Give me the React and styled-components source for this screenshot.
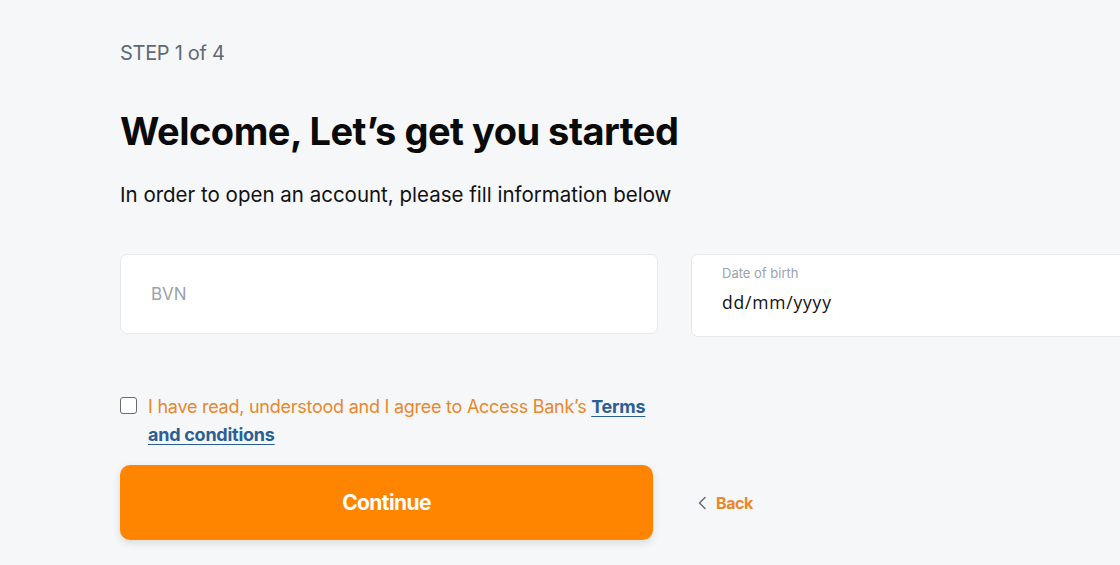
import React from 'react';
import styled, { createGlobalStyle } from 'styled-components';

const GlobalStyle = createGlobalStyle`
  html, body {
    margin: 0;
    padding: 0;
    background: #f6f7f9;
    overflow: hidden;
  }
  body {
    font-family: "Inter", "Liberation Sans", sans-serif;
  }
`;

const Page = styled.div`
  width: 1120px;
  height: 565px;
  box-sizing: border-box;
  padding: 39px 0 0 120px;
  overflow: hidden;
`;

const Step = styled.div`
  font-size: 20px;
  color: #5e6a73;
  letter-spacing: -0.3px;
  line-height: 28px;
`;

const Title = styled.h1`
  margin: 39px 0 0;
  font-size: 38px;
  font-weight: 700;
  letter-spacing: -0.5px;
  line-height: 50px;
  color: #0a0a0a;
`;

const Subtitle = styled.p`
  margin: 25px 0 0;
  font-size: 20.5px;
  color: #111;
  letter-spacing: 0;
  line-height: 28px;
`;

const Fields = styled.div`
  display: grid;
  grid-template-columns: 538px 538px;
  column-gap: 33px;
  margin-top: 45px;
  align-items: start;
`;

const Field = styled.label`
  display: flex;
  flex-direction: column;
  justify-content: center;
  box-sizing: border-box;
  height: ${p => p.h}px;
  background: #fff;
  border: 1px solid #e6e8ea;
  border-radius: 7px;
  padding: 0 30px;
`;

const Input = styled.input`
  border: none;
  outline: none;
  background: transparent;
  padding: 0;
  font-family: "Inter", "Liberation Sans", sans-serif;
  font-size: 17px;
  color: #111;
  &::placeholder {
    color: #9aa3ab;
  }
`;

const SmallLabel = styled.span`
  font-size: 13px;
  color: #9aa3ab;
  margin-top: -12px;
  margin-bottom: 9px;
`;

const DateValue = styled.span`
  font-family: "Open Sans", "DejaVu Sans", sans-serif;
  font-size: 17.5px;
  color: #111;
  letter-spacing: 0.8px;
`;

const Agree = styled.div`
  display: flex;
  align-items: flex-start;
  gap: 11px;
  margin-top: 56px;
  width: 540px;
`;

const Box = styled.span`
  flex: none;
  width: 15px;
  height: 15px;
  margin-top: 4px;
  border: 1px solid #6b6b6b;
  border-radius: 3px;
  background: #fff;
`;

const AgreeText = styled.span`
  font-size: 18px;
  line-height: 28px;
  color: #e8872c;
  letter-spacing: -0.25px;
`;

const TermsLink = styled.a`
  color: #2b5f93;
  font-weight: 700;
  text-decoration: underline;
  text-underline-offset: 3px;
`;

const Actions = styled.div`
  display: flex;
  align-items: center;
  gap: 44px;
  margin-top: 16px;
`;

const ContinueButton = styled.button`
  width: 533px;
  height: 75px;
  border: none;
  border-radius: 10px;
  background: #ff8500;
  color: #fff;
  font-family: "Inter", "Liberation Sans", sans-serif;
  font-size: 21px;
  font-weight: 700;
  letter-spacing: -0.6px;
  box-shadow: 0 3px 8px rgba(0, 0, 0, 0.12);
  cursor: pointer;
`;

const BackLink = styled.a`
  display: flex;
  align-items: center;
  gap: 9px;
  color: #e8872c;
  font-size: 16px;
  font-weight: 700;
  letter-spacing: -0.4px;
`;

export default function App() {
  return (
    <Page>
      <GlobalStyle />
      <Step>STEP 1 of 4</Step>
      <Title>Welcome, Let’s get you started</Title>
      <Subtitle>In order to open an account, please fill information below</Subtitle>
      <Fields>
        <Field h={80}>
          <Input placeholder="BVN" />
        </Field>
        <Field h={83}>
          <SmallLabel>Date of birth</SmallLabel>
          <DateValue>dd/mm/yyyy</DateValue>
        </Field>
      </Fields>
      <Agree>
        <Box />
        <AgreeText>
          I have read, understood and I agree to Access Bank’s <TermsLink>Terms and conditions</TermsLink>
        </AgreeText>
      </Agree>
      <Actions>
        <ContinueButton>Continue</ContinueButton>
        <BackLink>
          <svg width="10" height="14" viewBox="0 0 10 14" fill="none">
            <path d="M8 1.5L2.5 7L8 12.5" stroke="#6b7177" strokeWidth="1.6" strokeLinecap="round" strokeLinejoin="round" />
          </svg>
          Back
        </BackLink>
      </Actions>
    </Page>
  );
}
